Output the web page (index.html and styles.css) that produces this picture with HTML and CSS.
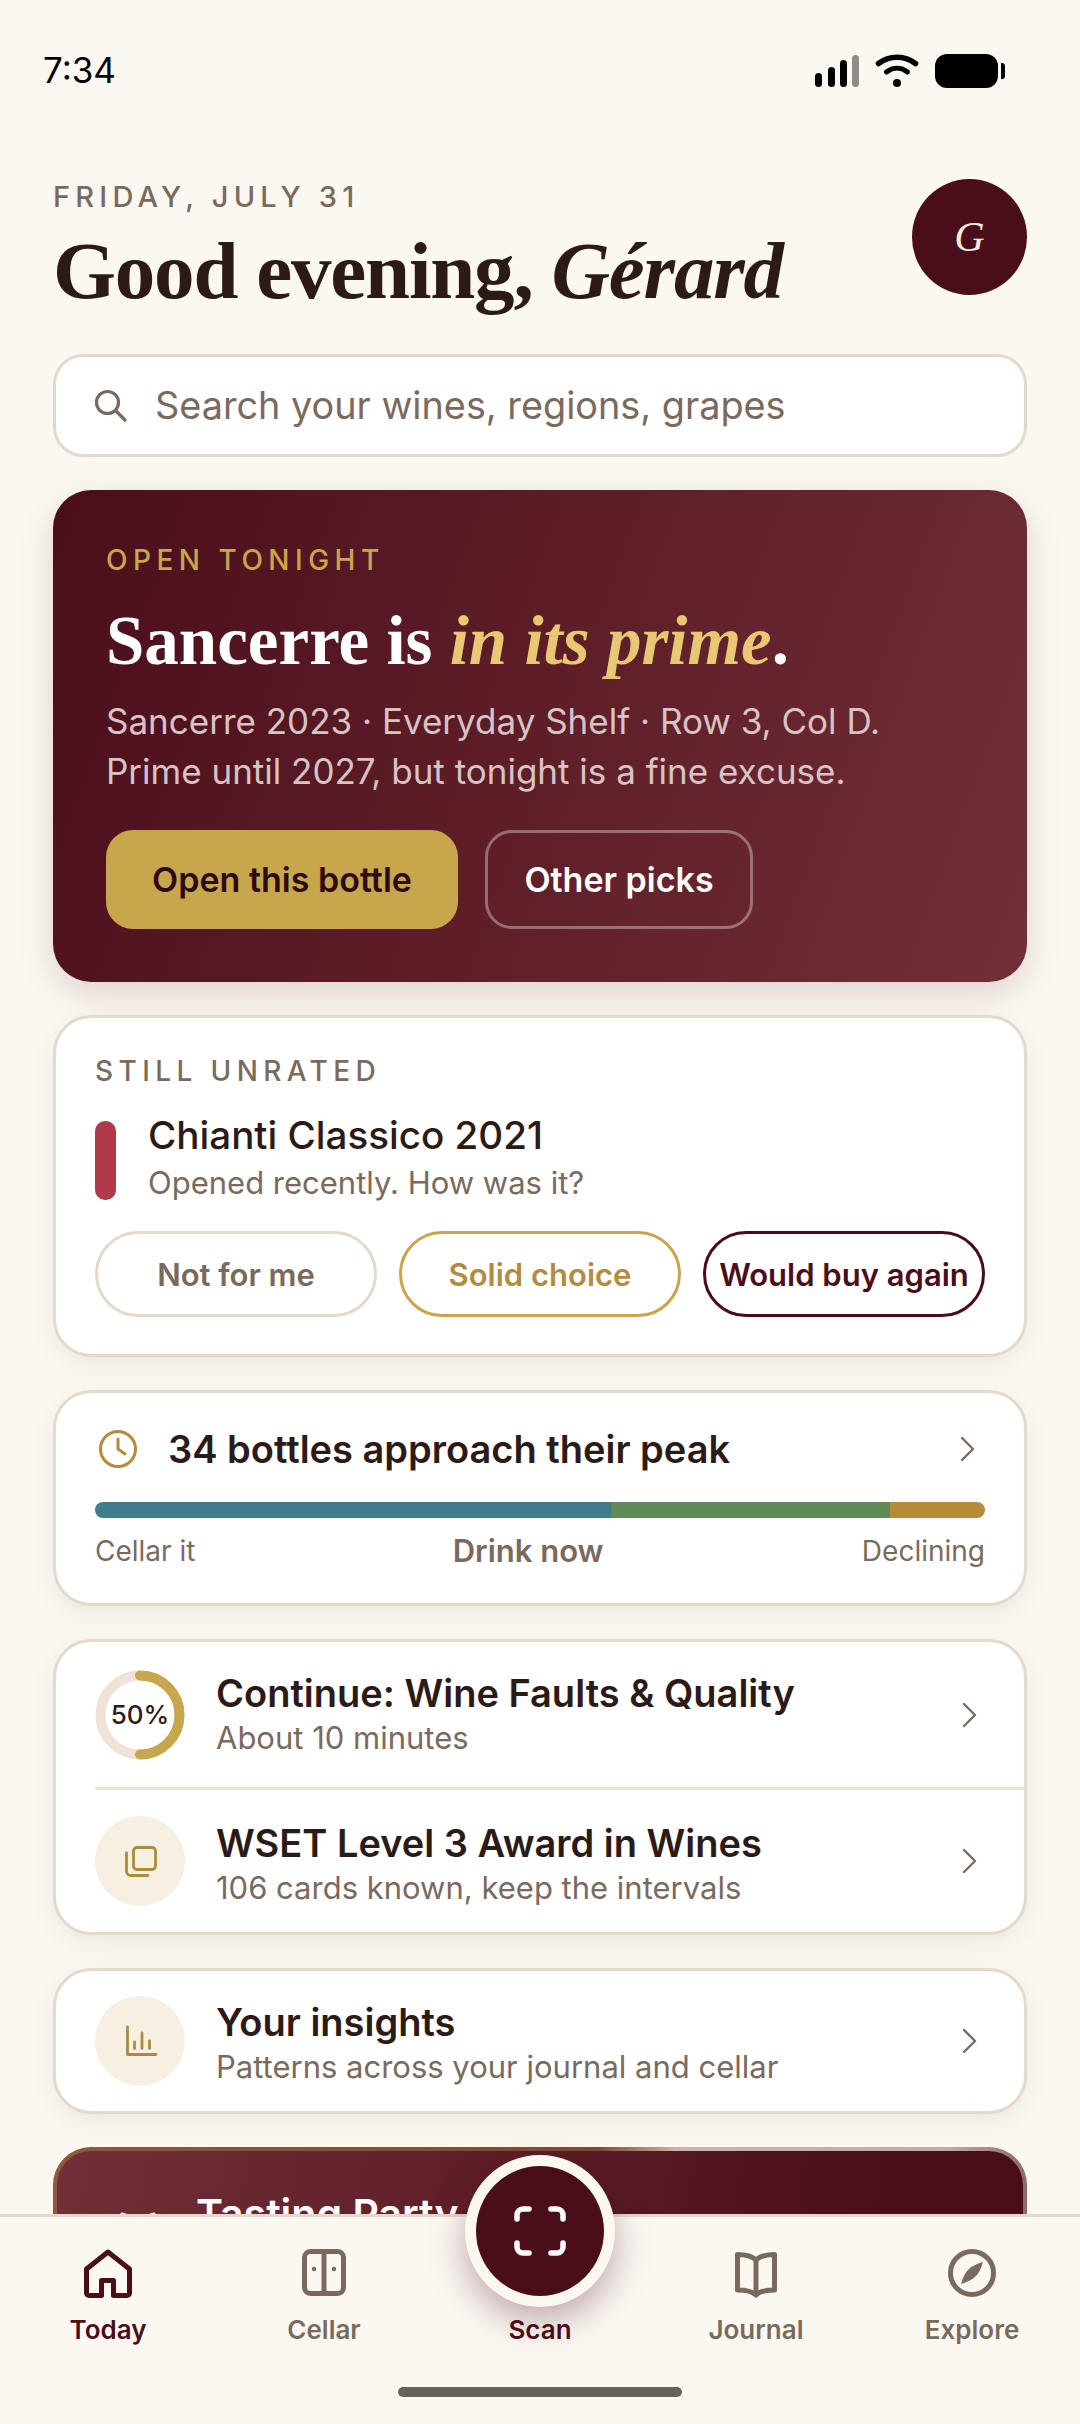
FILE: index.html
```html
<!DOCTYPE html>
<html lang="en">
<head>
    <meta charset="UTF-8">
    <meta name="viewport" content="width=device-width, initial-scale=1.0">
    <title>Today</title>
    <link rel="stylesheet" href="styles.css">
</head>
<body>
    <div class="app">
        <div class="status-bar">
            <span class="time">7:34</span>
            <div class="status-icons">
                <svg width="47" height="34" viewBox="0 0 47 34">
                    <rect x="3" y="19" width="7" height="14" rx="3.5" fill="#000"/>
                    <rect x="16" y="13" width="7" height="20" rx="3.5" fill="#000"/>
                    <rect x="28" y="6" width="7" height="27" rx="3.5" fill="#000"/>
                    <rect x="40" y="1" width="7" height="32" rx="3.5" fill="#8e8e89"/>
                </svg>
                <svg width="44" height="34" viewBox="0 0 44 34">
                    <path d="M3.5 9.5 C14 1 30 1 40.5 9.5" fill="none" stroke="#000" stroke-width="5.5" stroke-linecap="round"/>
                    <path d="M11.5 18 C18 13 26 13 32.5 18" fill="none" stroke="#000" stroke-width="5" stroke-linecap="round"/>
                    <circle cx="22" cy="29" r="4" fill="#000"/>
                </svg>
                <div class="battery"><div class="battery-body"></div><div class="battery-nub"></div></div>
            </div>
        </div>

        <main class="content">
            <header class="greeting">
                <div>
                    <div class="date">FRIDAY, JULY 31</div>
                    <h1>Good evening, <em>Gérard</em></h1>
                </div>
                <div class="avatar">G</div>
            </header>

            <div class="search">
                <svg width="40" height="40" viewBox="0 0 40 40" fill="none" stroke="#7a6a5e" stroke-width="3.2" stroke-linecap="round">
                    <circle cx="17.5" cy="17.5" r="11"/>
                    <path d="M26 26 L35 35"/>
                </svg>
                <span>Search your wines, regions, grapes</span>
            </div>

            <section class="hero">
                <div class="hero-label">OPEN TONIGHT</div>
                <h2>Sancerre is <em>in its prime</em>.</h2>
                <p>Sancerre 2023 · Everyday Shelf · Row 3, Col D.<br>Prime until 2027, but tonight is a fine excuse.</p>
                <div class="hero-actions">
                    <button class="btn-gold">Open this bottle</button>
                    <button class="btn-ghost">Other picks</button>
                </div>
            </section>

            <section class="card rate-card">
                <div class="card-label">STILL UNRATED</div>
                <div class="rate-wine">
                    <div class="wine-swatch"></div>
                    <div>
                        <div class="rate-name">Chianti Classico 2021</div>
                        <div class="rate-sub">Opened recently. How was it?</div>
                    </div>
                </div>
                <div class="rate-options">
                    <button class="pill">Not for me</button>
                    <button class="pill pill-gold">Solid choice</button>
                    <button class="pill pill-wine">Would buy again</button>
                </div>
            </section>

            <section class="card peak-card">
                <div class="peak-head">
                    <svg class="clock" width="40" height="40" viewBox="0 0 40 40" fill="none" stroke="#b98a35" stroke-width="3" stroke-linecap="round" stroke-linejoin="round">
                        <circle cx="20" cy="20" r="17.5"/>
                        <path d="M20 10 V20 L27 25"/>
                    </svg>
                    <span class="peak-title">34 bottles approach their peak</span>
                    <svg class="chevron" width="16" height="26" viewBox="0 0 16 26"><path d="M2 2 L13 13 L2 24"/></svg>
                </div>
                <div class="peak-bar">
                    <div class="seg-cellar"></div>
                    <div class="seg-now"></div>
                    <div class="seg-decline"></div>
                </div>
                <div class="peak-labels">
                    <span>Cellar it</span>
                    <span class="peak-now">Drink now</span>
                    <span>Declining</span>
                </div>
            </section>

            <section class="card">
                <div class="row row-first">
                    <div class="ring">
                        <svg width="90" height="90" viewBox="0 0 90 90" fill="none" stroke-width="10">
                            <circle cx="45" cy="45" r="39.5" stroke="#eee3d6"/>
                            <path d="M45 5.5 A39.5 39.5 0 0 1 45 84.5" stroke="#c8a64b" stroke-linecap="round"/>
                        </svg>
                        <span>50%</span>
                    </div>
                    <div class="row-text">
                        <div class="row-title">Continue: Wine Faults &amp; Quality</div>
                        <div class="row-sub">About 10 minutes</div>
                    </div>
                    <svg class="chevron" width="16" height="26" viewBox="0 0 16 26"><path d="M2 2 L13 13 L2 24"/></svg>
                </div>
                <div class="row-divider"></div>
                <div class="row">
                    <div class="icon-circle">
                        <svg width="40" height="40" viewBox="0 0 40 40" fill="none" stroke="#ae8b3c" stroke-width="2.8" stroke-linecap="round">
                            <rect x="13.5" y="6.5" width="22" height="22" rx="3.5"/>
                            <path d="M6.5 12 V30 a4.5 4.5 0 0 0 4.5 4.5 H28"/>
                        </svg>
                    </div>
                    <div class="row-text">
                        <div class="row-title">WSET Level 3 Award in Wines</div>
                        <div class="row-sub">106 cards known, keep the intervals</div>
                    </div>
                    <svg class="chevron" width="16" height="26" viewBox="0 0 16 26"><path d="M2 2 L13 13 L2 24"/></svg>
                </div>
            </section>

            <section class="card">
                <div class="row row-single">
                    <div class="icon-circle">
                        <svg width="40" height="40" viewBox="0 0 40 40" fill="none" stroke="#ae8b3c" stroke-width="2.8" stroke-linecap="round" stroke-linejoin="round">
                            <path d="M7.5 6 V33.5 H36"/>
                            <path d="M14.5 21 V27.5 M22 12 V27.5 M29.5 20 V27.5"/>
                        </svg>
                    </div>
                    <div class="row-text">
                        <div class="row-title">Your insights</div>
                        <div class="row-sub">Patterns across your journal and cellar</div>
                    </div>
                    <svg class="chevron" width="16" height="26" viewBox="0 0 16 26"><path d="M2 2 L13 13 L2 24"/></svg>
                </div>
            </section>

            <section class="party">
                <svg width="48" height="48" viewBox="0 0 48 48" fill="none" stroke="#fff" stroke-width="3" stroke-linecap="round">
                    <path d="M4 3 L14 6 M26 6 L36 3"/>
                </svg>
                <div class="party-title">Tasting Party</div>
            </section>
        </main>

        <nav class="tabbar">
            <button class="scan-button" aria-label="Scan">
                <svg width="60" height="60" viewBox="0 0 60 60" fill="none" stroke="#fff" stroke-width="5.5" stroke-linecap="round">
                    <path d="M7 18 V14 a6 6 0 0 1 6-6 h6"/>
                    <path d="M41 8 h6 a6 6 0 0 1 6 6 v4"/>
                    <path d="M7 42 v4 a6 6 0 0 0 6 6 h6"/>
                    <path d="M41 52 h6 a6 6 0 0 0 6-6 v-4"/>
                </svg>
            </button>
            <div class="tabs">
                <div class="tab tab-active">
                    <svg width="60" height="60" viewBox="0 0 60 60" fill="none" stroke="currentColor" stroke-width="5" stroke-linejoin="round">
                        <path d="M8.5 26 L30 9 L51.5 26 V50 a2.5 2.5 0 0 1-2.5 2.5 H35.5 V37.5 H23.5 V52.5 H11 a2.5 2.5 0 0 1-2.5-2.5 Z"/>
                    </svg>
                    <span>Today</span>
                </div>
                <div class="tab">
                    <svg width="60" height="60" viewBox="0 0 60 60" fill="none" stroke="currentColor" stroke-width="5">
                        <rect x="10.5" y="8.5" width="39" height="42" rx="6"/>
                        <path d="M30 8.5 V50.5"/>
                        <circle cx="20" cy="26" r="2.2" fill="currentColor" stroke="none"/>
                        <circle cx="40" cy="26" r="2.2" fill="currentColor" stroke="none"/>
                    </svg>
                    <span>Cellar</span>
                </div>
                <div class="tab tab-scan">
                    <div class="tab-spacer"></div>
                    <span>Scan</span>
                </div>
                <div class="tab">
                    <svg width="60" height="60" viewBox="0 0 60 60" fill="none" stroke="currentColor" stroke-width="5" stroke-linejoin="round">
                        <path d="M30 17 C26 13 18 11.5 11.5 11.5 V47 C18 47 26 48 30 52 C34 48 42 47 48.5 47 V11.5 C42 11.5 34 13 30 17 Z"/>
                        <path d="M30 17 V52"/>
                    </svg>
                    <span>Journal</span>
                </div>
                <div class="tab">
                    <svg width="60" height="60" viewBox="0 0 60 60" fill="none" stroke="currentColor" stroke-width="5">
                        <circle cx="30" cy="30" r="21.5"/>
                        <path d="M41 19 Q38 29.5 33.5 33.5 Q29.5 37.5 19 41 Q22 30.5 26.5 26.5 Q30.5 22 41 19 Z" fill="currentColor" stroke="none"/>
                    </svg>
                    <span>Explore</span>
                </div>
            </div>
            <div class="home-bar"></div>
        </nav>
    </div>
</body>
</html>
```

FILE: styles.css
```css
* {
    box-sizing: border-box;
}
body {
    margin: 0;
    background-color: #fbf8f2;
    font-family: Inter, "Liberation Sans", sans-serif;
    color: #2c1a17;
}
button {
    font-family: inherit;
    cursor: pointer;
}
.app {
    width: 1080px;
    height: 2424px;
    display: flex;
    flex-direction: column;
    overflow: hidden;
}

/* status bar */
.status-bar {
    height: 179px;
    flex-shrink: 0;
    display: flex;
    justify-content: space-between;
    align-items: flex-start;
    padding: 50px 75px 0 43px;
}
.time {
    font-size: 35px;
    line-height: 40px;
    color: #000;
}
.status-icons {
    display: flex;
    align-items: flex-start;
    gap: 16px;
    padding-top: 4px;
}
.battery {
    display: flex;
    align-items: center;
    gap: 3px;
}
.battery-body {
    width: 63px;
    height: 34px;
    background: #000;
    border-radius: 12px;
}
.battery-nub {
    width: 4px;
    height: 16px;
    background: #000;
    border-radius: 0 3px 3px 0;
}

/* main column */
.content {
    flex: 1;
    min-height: 0;
    overflow: hidden;
    padding: 0 53px;
    display: flex;
    flex-direction: column;
    gap: 33px;
}
.content > * {
    flex-shrink: 0;
}
.greeting {
    display: flex;
    justify-content: space-between;
    align-items: flex-start;
    height: 142px;
}
.date {
    padding-top: 1px;
    font-size: 29px;
    line-height: 34px;
    font-weight: 500;
    letter-spacing: 5.2px;
    color: #7a6a5e;
}
.greeting h1 {
    margin: 12px 0 0;
    font-family: "Liberation Serif", serif;
    font-size: 81px;
    line-height: 90px;
    font-weight: 700;
    letter-spacing: -1.2px;
    color: #2c1a17;
}
.greeting h1 em {
    font-style: italic;
}
.avatar {
    width: 115px;
    height: 116px;
    border-radius: 50%;
    background: #4a0e1a;
    color: #f3ebdf;
    display: flex;
    align-items: center;
    justify-content: center;
    font-family: "Liberation Serif", serif;
    font-style: italic;
    font-size: 42px;
}
.search {
    height: 103px;
    background: #fff;
    border: 3px solid #e5d9cb;
    border-radius: 30px;
    display: flex;
    align-items: center;
    gap: 25px;
    padding: 0 0 2px 34px;
    font-size: 37.8px;
    color: #7a6a5e;
}

/* hero */
.hero {
    height: 492px;
    border-radius: 38px;
    padding: 53px 53px 0;
    background: linear-gradient(110deg, #4a0e1a 0%, #722f37 100%);
    box-shadow: 0 12px 36px rgba(74, 14, 26, 0.16);
    color: #fff;
}
.hero-label {
    font-size: 28px;
    line-height: 34px;
    font-weight: 500;
    letter-spacing: 5.5px;
    color: #c8a64b;
}
.hero h2 {
    margin: 25px 0 0;
    font-family: "Liberation Serif", serif;
    font-size: 69px;
    line-height: 78px;
    font-weight: 700;
}
.hero h2 em {
    color: #e8c872;
}
.hero p {
    margin: 16px 0 0;
    font-size: 35px;
    line-height: 50px;
    color: #d8c4c6;
}
.hero-actions {
    display: flex;
    gap: 27px;
    margin-top: 34px;
}
.hero-actions button {
    height: 99px;
    border-radius: 27px;
    font-size: 34px;
    font-weight: 600;
}
.btn-gold {
    width: 352px;
    border: none;
    background: #c8a64b;
    color: #2c0a10;
}
.btn-ghost {
    width: 268px;
    border: 3px solid rgba(255, 255, 255, 0.35);
    background: transparent;
    color: #fff;
}

/* white cards */
.card {
    background: #fff;
    border: 3px solid #e5d9cb;
    border-radius: 38px;
    box-shadow: 0 8px 24px rgba(60, 30, 20, 0.07);
}
.rate-card {
    height: 342px;
    padding: 36px 39px 0;
}
.card-label {
    font-size: 28px;
    line-height: 34px;
    font-weight: 500;
    letter-spacing: 5.4px;
    color: #7a6a5e;
}
.rate-wine {
    display: flex;
    align-items: center;
    gap: 32px;
    margin-top: 24px;
}
.wine-swatch {
    width: 21px;
    height: 79px;
    border-radius: 10px;
    background: #b0394a;
}
.rate-name {
    font-size: 38.6px;
    line-height: 46px;
    font-weight: 500;
}
.rate-sub {
    font-size: 31px;
    line-height: 50px;
    color: #7a6a5e;
}
.rate-options {
    display: grid;
    grid-template-columns: 1fr 1fr 1fr;
    gap: 22px;
    margin-top: 23px;
}
.pill {
    height: 86px;
    padding: 0;
    background: #fff;
    border: 3px solid #e5d9cb;
    border-radius: 43px;
    font-size: 31px;
    font-weight: 600;
    color: #7a6a5e;
}
.pill-gold {
    border-color: #c8a64b;
    color: #b08d3f;
}
.pill-wine {
    border-color: #4a0e1a;
    color: #4a0e1a;
}

/* peak window */
.peak-card {
    height: 216px;
    padding: 0 39px;
}
.peak-head {
    display: flex;
    align-items: center;
    height: 104px;
    padding-top: 8px;
}
.clock {
    margin-left: 3px;
}
.peak-title {
    flex: 1;
    margin-left: 30px;
    font-size: 38px;
    font-weight: 600;
}
.peak-head .chevron {
    margin-right: 9px;
}
.peak-bar {
    display: flex;
    height: 16px;
    border-radius: 8px;
    overflow: hidden;
    margin-top: 5px;
}
.seg-cellar {
    width: 516px;
    background: #3f7c8c;
}
.seg-now {
    width: 279px;
    background: #5f8b57;
}
.seg-decline {
    flex: 1;
    background: #b98a35;
}
.peak-labels {
    display: flex;
    justify-content: space-between;
    margin-top: 13px;
    font-size: 28px;
    line-height: 40px;
    color: #7a6a5e;
}
.peak-now {
    font-weight: 600;
    font-size: 31px;
    margin-left: -1px;
}

/* list rows */
.row {
    display: flex;
    align-items: center;
    height: 142px;
    padding: 0 46px 0 39px;
}
.row-first {
    height: 145px;
}
.row-single {
    height: 140px;
}
.row-divider {
    height: 3px;
    margin-left: 39px;
    background: #eee3d6;
}
.ring {
    position: relative;
    width: 90px;
    height: 90px;
    flex-shrink: 0;
    display: flex;
    align-items: center;
    justify-content: center;
}
.ring svg {
    position: absolute;
    top: 0;
    left: 0;
}
.ring span {
    font-size: 26px;
    font-weight: 500;
}
.icon-circle {
    width: 90px;
    height: 90px;
    flex-shrink: 0;
    border-radius: 50%;
    background: #f6f0e3;
    display: flex;
    align-items: center;
    justify-content: center;
}
.row-text {
    flex: 1;
    margin-left: 31px;
    padding-top: 8px;
}
.row-first .row-text {
    padding-top: 0;
}
.row-single .row-text {
    padding-top: 5px;
}
.row-title {
    font-size: 38px;
    line-height: 46px;
    font-weight: 600;
}
.row-sub {
    font-size: 31px;
    line-height: 44px;
    color: #7a6a5e;
}
.chevron {
    flex-shrink: 0;
    fill: none;
    stroke: #7a6a5e;
    stroke-width: 2.4;
    stroke-linecap: round;
    stroke-linejoin: round;
}

/* tasting party, cut off by the tab bar */
.party {
    height: 200px;
    border: 4px solid transparent;
    border-radius: 38px;
    background:
        linear-gradient(100deg, #722f37 0%, #4a0e1a 85%) padding-box,
        linear-gradient(90deg, #8b5a3c 0%, #7e4c32 56%, #c9b3a6 64%, #c3aca0 92%, #8a6a6c 100%) border-box;
    display: flex;
    align-items: flex-start;
    padding: 40px 0 0 61px;
    gap: 30px;
}
.party svg {
    margin-top: 20px;
}
.party-title {
    font-size: 41px;
    line-height: 46px;
    font-weight: 600;
    color: #fff;
}

/* tab bar */
.tabbar {
    position: relative;
    flex-shrink: 0;
    height: 210px;
    border-top: 3px solid #e5d9cb;
    background: #fbf8f2;
    display: flex;
    flex-direction: column;
}
.tabs {
    display: grid;
    grid-template-columns: repeat(5, 1fr);
    padding-top: 26px;
}
.tab {
    display: flex;
    flex-direction: column;
    align-items: center;
    gap: 9px;
    color: #7a6a5e;
    font-size: 26px;
    line-height: 36px;
    font-weight: 600;
}
.tab-active,
.tab-scan {
    color: #4a0e1a;
}
.tab-spacer {
    height: 60px;
}
.tab span {
    position: relative;
}
.scan-button {
    position: absolute;
    left: 465px;
    top: -62px;
    width: 150px;
    height: 152px;
    padding: 0;
    border: 11px solid #fbf8f2;
    border-radius: 50%;
    background: #4a0e1a;
    display: flex;
    align-items: center;
    justify-content: center;
    box-shadow: 0 14px 36px rgba(74, 14, 26, 0.34);
}
.home-bar {
    width: 284px;
    height: 10px;
    border-radius: 5px;
    background: #66635c;
    margin: 39px auto 0;
}
```
